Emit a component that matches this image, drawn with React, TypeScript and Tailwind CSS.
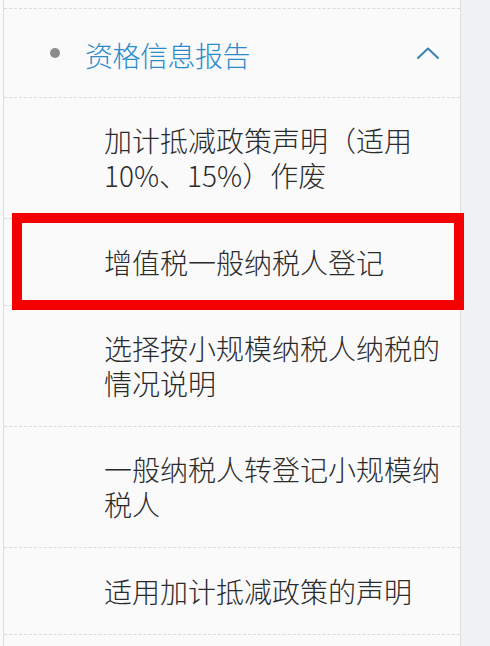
import React from 'react';

const font = { fontFamily: '"Noto Sans CJK SC", "Liberation Sans", sans-serif' };

interface MenuItem {
  label: string;
  tall: boolean;
}

const items: MenuItem[] = [
  { label: '加计抵减政策声明（适用10%、15%）作废', tall: true },
  { label: '增值税一般纳税人登记', tall: false },
  { label: '选择按小规模纳税人纳税的情况说明', tall: true },
  { label: '一般纳税人转登记小规模纳税人', tall: true },
  { label: '适用加计抵减政策的声明', tall: false },
];

function ChevronUp() {
  return (
    <svg width="24" height="14" viewBox="0 0 24 14" fill="none">
      <path d="M2 12 L12 2.5 L22 12" stroke="#3b82b0" strokeWidth="2" strokeLinecap="round" strokeLinejoin="round" />
    </svg>
  );
}

export default function App() {
  return (
    <div className="relative flex h-[646px] w-[490px] overflow-hidden bg-[#f0f1f3]" style={font}>
      {/* left gutter */}
      <div className="w-[3px] bg-[#fbfbfc]" />

      {/* menu panel */}
      <div className="flex w-[458px] flex-col border-x border-[#dcdee1] bg-[#fafafb] pt-[8px]">
        {/* section header */}
        <div className="flex h-[89px] items-center border-t border-dashed border-[#d9dbde] pr-[20px]">
          <span className="ml-[46px] h-[10px] w-[10px] rounded-full bg-[#8c8a8a]" />
          <span className="ml-[25px] mt-[3px] flex-1 text-[28px] font-light leading-none tracking-[-0.5px] text-[#2a8ccb]">资格信息报告</span>
          <ChevronUp />
        </div>

        {items.map((item) => (
          <div
            key={item.label}
            className={`flex items-center border-t border-dashed border-[#d9dbde] pl-[100px] pr-[8px] ${item.tall ? 'h-[121px]' : 'h-[87px]'}`}
          >
            <span className="text-[28px] font-light leading-[35px] text-[#2b2b2b]">{item.label}</span>
          </div>
        ))}

        <div className="border-t border-dashed border-[#d9dbde]" />
      </div>

      {/* highlight frame around the selected entry */}
      <div className="pointer-events-none absolute left-[12px] top-[213px] h-[97px] w-[452px] border-[10px] border-[#f40000]" />
    </div>
  );
}
